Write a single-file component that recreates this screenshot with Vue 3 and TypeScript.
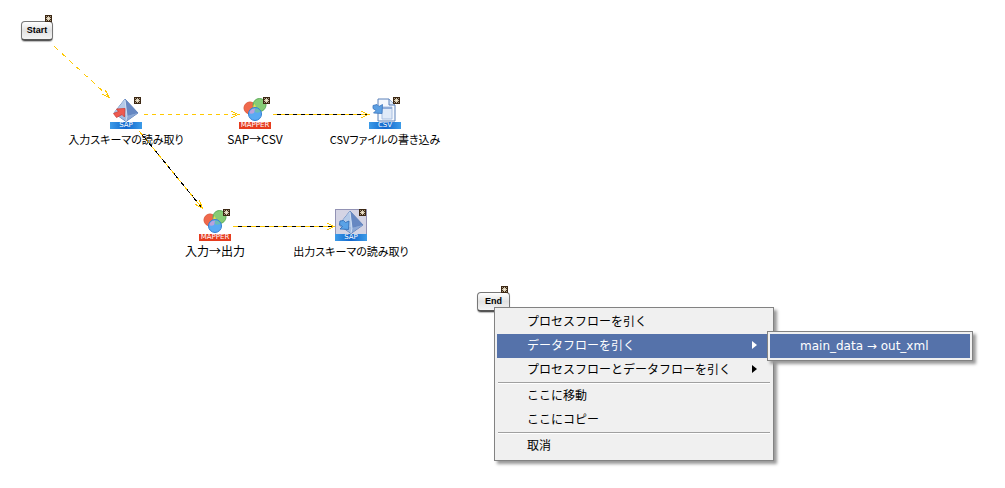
<script setup lang="ts">
type Kind = 'sap' | 'mapper' | 'csv'
interface FlowNode { id: string; kind: Kind; label: string; selected?: boolean; output?: boolean }
interface Edge { x1: number; y1: number; x2: number; y2: number; data: boolean; dash: string }

const nodes: FlowNode[] = [
  { id: 'n1', kind: 'sap', label: '入力スキーマの読み取り' },
  { id: 'n2', kind: 'mapper', label: 'SAP→CSV' },
  { id: 'n3', kind: 'csv', label: 'CSVファイルの書き込み' },
  { id: 'n4', kind: 'mapper', label: '入力→出力' },
  { id: 'n5', kind: 'sap', label: '出力スキーマの読み取り', selected: true, output: true },
]
const edges: Edge[] = [
  { x1: 54, y1: 46, x2: 109, y2: 97, data: false, dash: '5 5' },
  { x1: 143, y1: 114, x2: 238, y2: 114, data: false, dash: '4 4' },
  { x1: 272, y1: 114, x2: 368, y2: 114, data: true, dash: '4 4' },
  { x1: 139, y1: 131, x2: 202, y2: 208, data: true, dash: '5 5' },
  { x1: 232, y1: 226, x2: 334, y2: 226, data: true, dash: '5 4' },
]
function head(e: Edge): string {
  const a = Math.atan2(e.y2 - e.y1, e.x2 - e.x1)
  const p = (d: number) => `${Math.round(e.x2 - 8 * Math.cos(a + d))} ${Math.round(e.y2 - 8 * Math.sin(a + d))}`
  return `M${p(0.36)}L${e.x2} ${e.y2}L${p(-0.36)}`
}
const captions: Record<Kind, string> = { sap: 'SAP', mapper: 'MAPPER', csv: 'CSV' }
const star = 'M3.5 1v5M1 3.5h5M1.3 1.3l4.4 4.4M5.7 1.3 1.3 5.7'
</script>

<template>
  <main class="canvas">
    <svg class="edges" aria-hidden="true">
      <g v-for="(e, i) in edges" :key="i" fill="none" shape-rendering="crispEdges" transform="translate(.5 .5)">
        <line v-if="e.data" :x1="e.x1" :y1="e.y1" :x2="e.x2" :y2="e.y2" stroke="#000" />
        <line :x1="e.x1" :y1="e.y1" :x2="e.x2" :y2="e.y2" stroke="#ffc800" :stroke-dasharray="e.dash" />
        <path :d="head(e)" stroke="#ffc800" />
      </g>
    </svg>

    <button type="button" class="terminal start">Start<i class="badge"><svg viewBox="0 0 7 7"><path :d="star" /></svg></i></button>
    <button type="button" class="terminal end">End<i class="badge"><svg viewBox="0 0 7 7"><path :d="star" /></svg></i></button>

    <div v-for="n in nodes" :key="n.id" class="node" :class="[n.id, { selected: n.selected }]">
      <div class="icon">
        <svg v-if="n.kind === 'sap'" class="art" viewBox="0 0 32 25" aria-hidden="true">
          <path d="M15 2 28 16 16 24.500 4 16Z" fill="#86a3d0" stroke="#5b7fb8" stroke-width=".9" />
          <path d="M15 2 28 16 17 19Z" fill="#6688c2" />
          <path d="M28 16 17 19 16 24Z" fill="#8ba8d6" />
          <path d="M15 2 17 19 4 16Z" fill="#b4cae8" />
          <path d="M4 16 17 19 16 24Z" fill="#a2bbe0" />
          <path d="M15 3 17 19 16 24" stroke="#dce9f8" stroke-width=".8" fill="none" />
          <path v-if="n.output" d="M5 12 8.500 11.500 10.500 13.500 14 12 13.500 20.500 5 20 7.500 17.500 4.500 15.500Z" fill="#5aa2e6" stroke="#2d69b4" stroke-width=".8" />
          <path v-else d="M6.500 12 15 11.500 14.500 20 12 17.500 6.500 20.500 3.500 16.500 8.500 14.500Z" fill="#ee5a50" stroke="#cc4038" stroke-width=".8" />
        </svg>
        <svg v-else-if="n.kind === 'mapper'" class="art" viewBox="0 0 32 25" aria-hidden="true">
          <circle cx="11" cy="11" r="6" fill="#f0694c" stroke="#e05a3c" />
          <circle cx="20.500" cy="8" r="6.500" fill="#86cc76" stroke="#5cac58" />
          <path d="M15.500 7Q18.500 11 16 15Q12.500 11 15.500 7" fill="#e8dc50" />
          <circle cx="16" cy="17" r="6.500" fill="#5aaaf2" />
          <path d="M10 16Q11 11.500 16 11.500L15 16Q12 17.500 10 16Z" fill="#b9a2dc" />
          <path d="M16 11.500Q21 11 22 14.500Q19 16.500 16 15Z" fill="#6cbcb4" />
          <circle cx="16" cy="17" r="6.500" fill="none" stroke="#2f7fd4" />
        </svg>
        <svg v-else class="art" viewBox="0 0 32 25" aria-hidden="true">
          <path d="M9 2H20L26 8V24H9Z" fill="#f4f8fe" stroke="#5a80b8" />
          <path d="M20 2V8H26" fill="#dce8f8" stroke="#5a80b8" />
          <path d="M13 10H23V22H13Z" fill="#e0eaf8" stroke="#a9bfe0" />
          <path d="M13 10H23V12H13Z" fill="#90acd8" />
          <path d="M4 8.500 8 7.500 10 9.500 13.500 7.500 13 16.500 4.500 16 7 13.500 4 11.500Z" fill="#5c9fe2" stroke="#3a74bc" stroke-width=".8" />
        </svg>
        <span class="tag" :class="n.kind">{{ captions[n.kind] }}</span>
        <i class="badge"><svg viewBox="0 0 7 7"><path :d="star" /></svg></i>
      </div>
      <span class="label" :class="n.kind">{{ n.label }}</span>
    </div>

    <div class="menu main-menu" role="menu">
      <button type="button" role="menuitem">プロセスフローを引く</button>
      <button type="button" role="menuitem" class="active" aria-haspopup="true" aria-expanded="true">データフローを引く<svg class="caret" viewBox="0 0 5 8"><path d="M0 0 5 4 0 8Z" /></svg></button>
      <button type="button" role="menuitem" aria-haspopup="true">プロセスフローとデータフローを引く<svg class="caret" viewBox="0 0 5 8"><path d="M0 0 5 4 0 8Z" /></svg></button>
      <hr>
      <button type="button" role="menuitem">ここに移動</button>
      <button type="button" role="menuitem">ここにコピー</button>
      <hr>
      <button type="button" role="menuitem">取消</button>
    </div>
    <div class="menu sub-menu" role="menu">
      <button type="button" role="menuitem" class="active">main_data → out_xml</button>
    </div>
  </main>
</template>

<style>
body { background: #fff; }
</style>
<style scoped>
.canvas { position: relative; min-height: 100vh; overflow: hidden; background: #fff; color: #000; font-family: "Liberation Sans", "Noto Sans CJK JP", sans-serif; }
.edges { position: absolute; inset: 0; width: 100%; height: 100%; }
.terminal { position: absolute; width: 32px; height: 20px; padding: 0; border: 1px solid #777; border-bottom: 2px solid #555; border-radius: 4px; background: linear-gradient(#fff, #e2e2e2 50%, #f4f4f4); box-shadow: 0 1px 1px #bbb; font: bold 9px/17px "Liberation Sans", sans-serif; color: #000; text-align: center; }
.start { left: 21px; top: 21px; }
.end { left: 477px; top: 292px; width: 33px; }
.badge { position: absolute; top: 0; right: 1px; width: 7px; height: 7px; background: #3c2814; }
.terminal .badge { top: -7px; right: 0; }
.end .badge { right: 1px; }
.badge svg { display: block; width: 7px; height: 7px; fill: none; stroke: #fff5dc; stroke-width: 0.8; }
.node { position: absolute; display: flex; flex-direction: column; align-items: center; width: 132px; }
.n1 { left: 60px; top: 97px; }
.n2 { left: 189px; top: 97px; }
.n3 { left: 319px; top: 97px; }
.n4 { left: 149px; top: 209px; }
.n5 { left: 285px; top: 209px; }
.icon { position: relative; display: flex; flex-direction: column; width: 32px; height: 32px; }
.art { display: block; width: 32px; height: 25px; }
.selected .icon { background: #d4d4e4; box-shadow: inset 0 0 0 1px #9292b4; }
.tag { height: 7px; overflow: hidden; background: linear-gradient(90deg, #3c9be8, #1266cc 50%, #3c9be8); color: #fff; font: 7px/7px "DejaVu Sans", sans-serif; text-align: center; }
.tag.mapper { background: #e63c1e; }
.label { margin-top: 2px; font: 11px/16px "Noto Sans CJK JP", sans-serif; white-space: nowrap; font-feature-settings: "palt"; }
.label.mapper { font-size: 12px; }
.menu { position: absolute; box-sizing: border-box; padding: 2px; border: 1px solid #828282; background: #f0f0f0; box-shadow: 3px 3px 3px #999; }
.main-menu { left: 494px; top: 307px; width: 280px; }
.sub-menu { left: 767px; top: 331px; width: 206px; }
.menu button { display: flex; align-items: center; justify-content: space-between; width: 100%; height: 24px; padding: 0 14px 2px 30px; border: 0; background: none; color: #000; font: 12px/22px "Noto Sans CJK JP", sans-serif; text-align: left; white-space: nowrap; }
.menu button.active { background: #5572aa; color: #fff; }
.sub-menu button { padding-bottom: 0; font-family: "DejaVu Sans", "Noto Sans CJK JP", sans-serif; }
.caret { width: 5px; height: 8px; fill: currentColor; }
.menu hr { height: 1px; margin: 0 1px; border: 0; border-top: 1px solid #a0a0a0; background: #fff; }
</style>
